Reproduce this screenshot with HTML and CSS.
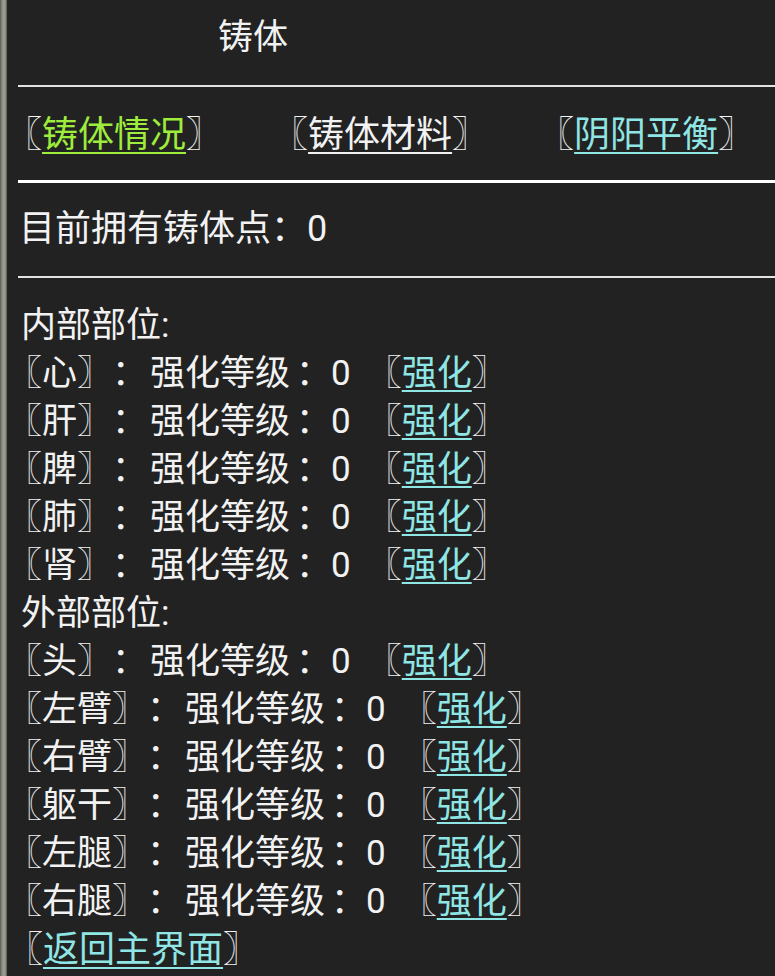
FILE: index.html
```html
<!DOCTYPE html>
<html lang="zh-CN">
<head>
<meta charset="utf-8">
<title>铸体</title>
<link rel="stylesheet" href="styles.css">
</head>
<body>
<div class="frame">
  <div class="edge"></div>
  <div class="main">
    <div class="title">铸体</div>
    <div class="rule thin"></div>
    <div class="nav">
      <span class="item">〖<a class="lk green" href="#">铸体情况</a>〗</span>
      <span class="item">〖<a class="lk white" href="#">铸体材料</a>〗</span>
      <span class="item">〖<a class="lk cyan" href="#">阴阳平衡</a>〗</span>
    </div>
    <div class="rule thick"></div>
    <div class="points">目前拥有铸体点：0</div>
    <div class="rule thin"></div>
    <div class="list">
      <div class="line">内部部位:</div>
      <div class="line br">〖心〗：<span class="lv">强化等级</span><span class="cl">：</span>0<span class="act">〖<a class="lk cyan" href="#">强化</a>〗</span></div>
      <div class="line br">〖肝〗：<span class="lv">强化等级</span><span class="cl">：</span>0<span class="act">〖<a class="lk cyan" href="#">强化</a>〗</span></div>
      <div class="line br">〖脾〗：<span class="lv">强化等级</span><span class="cl">：</span>0<span class="act">〖<a class="lk cyan" href="#">强化</a>〗</span></div>
      <div class="line br">〖肺〗：<span class="lv">强化等级</span><span class="cl">：</span>0<span class="act">〖<a class="lk cyan" href="#">强化</a>〗</span></div>
      <div class="line br">〖肾〗：<span class="lv">强化等级</span><span class="cl">：</span>0<span class="act">〖<a class="lk cyan" href="#">强化</a>〗</span></div>
      <div class="line">外部部位:</div>
      <div class="line br">〖头〗：<span class="lv">强化等级</span><span class="cl">：</span>0<span class="act">〖<a class="lk cyan" href="#">强化</a>〗</span></div>
      <div class="line br">〖左臂〗：<span class="lv">强化等级</span><span class="cl">：</span>0<span class="act">〖<a class="lk cyan" href="#">强化</a>〗</span></div>
      <div class="line br">〖右臂〗：<span class="lv">强化等级</span><span class="cl">：</span>0<span class="act">〖<a class="lk cyan" href="#">强化</a>〗</span></div>
      <div class="line br">〖躯干〗：<span class="lv">强化等级</span><span class="cl">：</span>0<span class="act">〖<a class="lk cyan" href="#">强化</a>〗</span></div>
      <div class="line br">〖左腿〗：<span class="lv">强化等级</span><span class="cl">：</span>0<span class="act">〖<a class="lk cyan" href="#">强化</a>〗</span></div>
      <div class="line br">〖右腿〗：<span class="lv">强化等级</span><span class="cl">：</span>0<span class="act">〖<a class="lk cyan" href="#">强化</a>〗</span></div>
      <div class="line br back">〖<a class="lk cyan" href="#">返回主界面</a>〗</div>
    </div>
  </div>
</div>
</body>
</html>
```
FILE: styles.css
```css
html, body {
  margin: 0;
  padding: 0;
  background: #222222;
}
body {
  font-family: Roboto, "Noto Sans CJK SC", sans-serif;
  font-size: 35px;
  color: #f2f2f2;
  text-spacing-trim: space-all;
}
.frame {
  display: flex;
  min-height: 976px;
  overflow: hidden;
}
.edge {
  flex: 0 0 7px;
  background: linear-gradient(to right, #5a5c56 0, #8a8c82 2px, #a0a298 4px, #83857c 6px, #4a4b46 7px);
}
.main {
  flex: 1;
  min-width: 0;
  padding-left: 11px;
}
.title {
  padding: 14px 0 23px 200px;
  line-height: 48px;
  white-space: nowrap;
}
.rule {
  background: #e2e2e2;
}
.rule.thin {
  height: 2px;
}
.rule.thick {
  height: 3px;
  background: #ffffff;
}
.nav {
  display: flex;
  gap: 50px;
  margin-left: -12px;
  padding: 24px 0 21px 0;
  font-size: 36px;
  line-height: 48px;
  white-space: nowrap;
}
.points {
  padding: 22px 0 23px 1px;
  font-size: 36px;
  line-height: 48px;
  white-space: nowrap;
}
.list {
  padding: 24px 0 0 3px;
}
.line {
  line-height: 48px;
  white-space: nowrap;
}
.line.br {
  margin-left: -14px;
}
.line.back {
  font-size: 36px;
}
.lv {
  margin-left: 3px;
}
.cl {
  margin-left: 6px;
}
.act {
  margin-left: 16px;
}
.lk {
  text-decoration: underline;
  text-decoration-thickness: 2px;
  text-underline-offset: 5px;
}
.lk.green { color: #9eec3c; }
.lk.white { color: #f2f2f2; }
.lk.cyan { color: #8fe6e4; }
```
